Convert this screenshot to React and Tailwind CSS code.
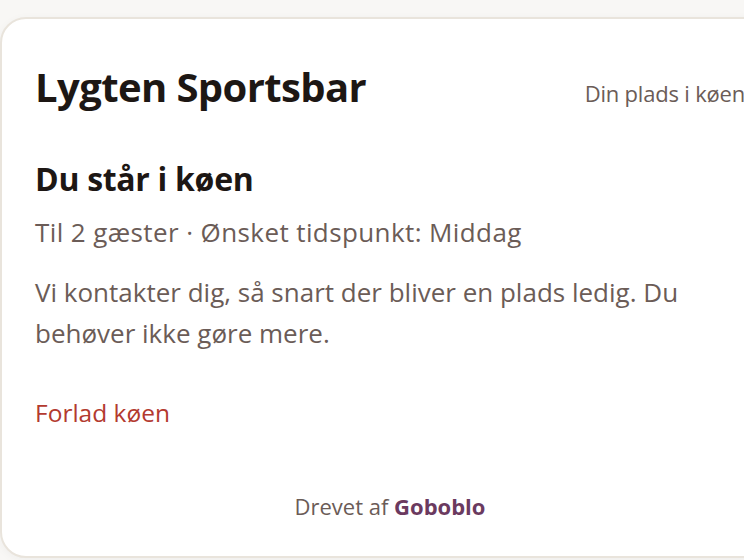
export default function App() {
  return (
    <div className="min-h-[560px] bg-[#f8f7f5] pt-[17px] overflow-hidden" style={{ fontFamily: '"Open Sans", "Noto Sans", sans-serif' }}>
      <div className="w-[780px] h-[541px] bg-white border-2 border-[#e9e4dc] rounded-[26px] shadow-[0_2px_10px_rgba(0,0,0,0.04)] px-[33px] pt-[44px] pb-[35px] flex flex-col">
        <div className="flex items-baseline justify-between">
          <h1 className="text-[40px] font-bold text-[#1d1714] leading-[48px] tracking-[-0.6px]">Lygten Sportsbar</h1>
          <span className="text-[22px] text-[#6b5c57] tracking-[-0.2px]">Din plads i køen</span>
        </div>
        <h2 className="mt-[48px] text-[32px] font-bold text-[#1d1714] leading-[40px] tracking-[-0.3px]">Du står i køen</h2>
        <p className="mt-[15px] text-[26px] text-[#6b5c57] leading-[36px] tracking-[0.4px]">Til 2 gæster · Ønsket tidspunkt: Middag</p>
        <p className="mt-[22px] text-[26px] text-[#6b5c57] leading-[41px] max-w-[700px]">Vi kontakter dig, så snart der bliver en plads ledig. Du behøver ikke gøre mere.</p>
        <button className="mt-[42px] self-start text-[24.5px] text-[#b33a2f] leading-[34px]">Forlad køen</button>
        <div className="mt-auto text-center text-[22px] leading-[30px] text-[#6b5c57]">
          Drevet af <span className="font-bold text-[#6b3a5f]">Goboblo</span>
        </div>
      </div>
    </div>
  );
}
